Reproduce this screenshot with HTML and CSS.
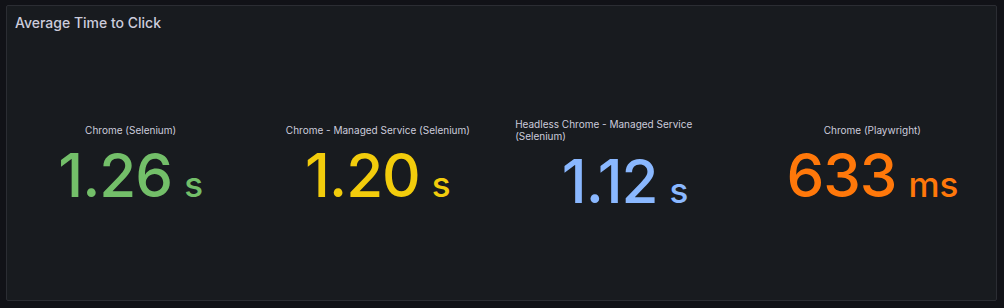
FILE: index.html
```html
<!DOCTYPE html>
<html lang="en">
<head>
<meta charset="UTF-8">
<meta name="viewport" content="width=device-width, initial-scale=1.0">
<title>Average Time to Click</title>
<link rel="stylesheet" href="styles.css">
</head>
<body>

<div class="panel">
  <div class="panel-header">
    <h2 class="panel-title">Average Time to Click</h2>
  </div>

  <div class="stats">
    <div class="stat">
      <div class="stat-label">Chrome (Selenium)</div>
      <div class="stat-value green">1.26<span class="unit">s</span></div>
    </div>
    <div class="stat">
      <div class="stat-label">Chrome - Managed Service (Selenium)</div>
      <div class="stat-value yellow">1.20<span class="unit">s</span></div>
    </div>
    <div class="stat">
      <div class="stat-label wrap">Headless Chrome - Managed Service (Selenium)</div>
      <div class="stat-value blue">1.12<span class="unit">s</span></div>
    </div>
    <div class="stat">
      <div class="stat-label">Chrome (Playwright)</div>
      <div class="stat-value orange">633<span class="unit">ms</span></div>
    </div>
  </div>
</div>

</body>
</html>
```

FILE: styles.css
```css
body {
  margin: 0;
  padding: 5px 0 0 6px;
  background-color: #111217;
  font-family: Inter, "Noto Sans", sans-serif;
  color: #ccccdc;
}

.panel {
  box-sizing: border-box;
  width: 991px;
  height: 296px;
  background-color: #181b1f;
  border: 1px solid #2b2d33;
  border-radius: 2px;
  display: flex;
  flex-direction: column;
}

.panel-header {
  height: 32px;
  padding: 0 8px;
  display: flex;
  align-items: center;
}

.panel-title {
  margin: 0;
  font-size: 14px;
  font-weight: 500;
  color: #ccccdc;
}

.stats {
  flex: 1;
  display: flex;
  padding: 0;
}

.stat {
  flex: 1;
  display: flex;
  flex-direction: column;
  align-items: center;
  justify-content: center;
}

.stat-label {
  font-size: 10px;
  line-height: 12px;
  color: #ccccdc;
  margin-bottom: 9px;
}

.stat-label.wrap {
  width: 220px;
}

.stat-value {
  font-size: 60px;
  font-weight: 500;
  line-height: 60px;
  letter-spacing: -1px;
}

.unit {
  font-size: 35px;
  margin-left: 12px;
  letter-spacing: 0;
}

.green { color: #73bf69; }
.yellow { color: #f2cc0c; }
.blue { color: #8ab8ff; }
.orange { color: #ff780a; }
```
